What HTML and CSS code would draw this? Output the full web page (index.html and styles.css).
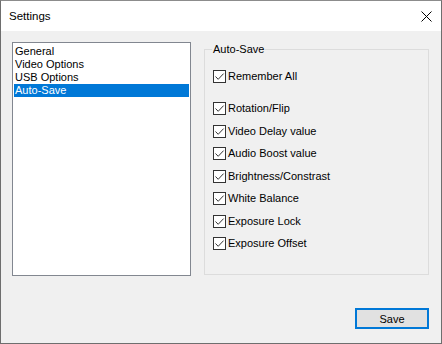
FILE: index.html
```html
<!DOCTYPE html>
<html lang="en">
<head>
  <meta charset="UTF-8">
  <title>Settings</title>
  <link rel="stylesheet" href="styles.css">
</head>
<body>
  <div class="window">
    <div class="titlebar">
      <span class="title">Settings</span>
      <svg class="close" width="11" height="11" viewBox="0 0 11 11">
        <path d="M0.5 0.5 L10.5 10.5 M10.5 0.5 L0.5 10.5" stroke="#000" stroke-width="1" fill="none"/>
      </svg>
    </div>

    <div class="client">
      <div class="panes">
        <ul class="listbox">
          <li>General</li>
          <li>Video Options</li>
          <li>USB Options</li>
          <li class="selected">Auto-Save</li>
        </ul>

        <fieldset class="group">
          <legend>Auto-Save</legend>
          <label class="check first"><span class="box"><svg width="11" height="11" viewBox="0 0 11 11"><path d="M1.5 5.5 L4.2 8.3 L9.6 2.6" stroke="#333" stroke-width="1" fill="none"/></svg></span>Remember All</label>
          <label class="check apart"><span class="box"><svg width="11" height="11" viewBox="0 0 11 11"><path d="M1.5 5.5 L4.2 8.3 L9.6 2.6" stroke="#333" stroke-width="1" fill="none"/></svg></span>Rotation/Flip</label>
          <label class="check"><span class="box"><svg width="11" height="11" viewBox="0 0 11 11"><path d="M1.5 5.5 L4.2 8.3 L9.6 2.6" stroke="#333" stroke-width="1" fill="none"/></svg></span>Video Delay value</label>
          <label class="check"><span class="box"><svg width="11" height="11" viewBox="0 0 11 11"><path d="M1.5 5.5 L4.2 8.3 L9.6 2.6" stroke="#333" stroke-width="1" fill="none"/></svg></span>Audio Boost value</label>
          <label class="check"><span class="box"><svg width="11" height="11" viewBox="0 0 11 11"><path d="M1.5 5.5 L4.2 8.3 L9.6 2.6" stroke="#333" stroke-width="1" fill="none"/></svg></span>Brightness/Constrast</label>
          <label class="check"><span class="box"><svg width="11" height="11" viewBox="0 0 11 11"><path d="M1.5 5.5 L4.2 8.3 L9.6 2.6" stroke="#333" stroke-width="1" fill="none"/></svg></span>White Balance</label>
          <label class="check"><span class="box"><svg width="11" height="11" viewBox="0 0 11 11"><path d="M1.5 5.5 L4.2 8.3 L9.6 2.6" stroke="#333" stroke-width="1" fill="none"/></svg></span>Exposure Lock</label>
          <label class="check"><span class="box"><svg width="11" height="11" viewBox="0 0 11 11"><path d="M1.5 5.5 L4.2 8.3 L9.6 2.6" stroke="#333" stroke-width="1" fill="none"/></svg></span>Exposure Offset</label>
        </fieldset>
      </div>

      <div class="footer">
        <button class="save">Save</button>
      </div>
    </div>
  </div>
</body>
</html>
```

FILE: styles.css
```css
body {
  margin: 0;
  font-family: "Liberation Sans", Arial, sans-serif;
  font-size: 11px;
  color: #000;
  background: #fff;
}

.window {
  box-sizing: border-box;
  width: 442px;
  height: 344px;
  border: 1px solid #6e6e6e;
  border-top-color: #8c8c8c;
  display: flex;
  flex-direction: column;
}

.titlebar {
  height: 30px;
  flex: none;
  background: #fff;
  display: flex;
  align-items: center;
  padding-left: 8px;
}

.title {
  font-size: 11.5px;
  flex: 1;
}

.close {
  margin-right: 9px;
}

.client {
  flex: 1;
  background: #f0f0f0;
  padding: 11px 12px 14px 11px;
  display: flex;
  flex-direction: column;
}

.panes {
  display: flex;
  gap: 13px;
  align-items: flex-start;
}

.listbox {
  box-sizing: border-box;
  width: 179px;
  height: 234px;
  margin: 0;
  padding: 2px 1px;
  list-style: none;
  background: #fff;
  border: 1px solid #828790;
}

.listbox li {
  line-height: 13px;
  height: 13px;
  padding-left: 1px;
}

.listbox li.selected {
  background: #0078d7;
  color: #fff;
}

.group {
  box-sizing: border-box;
  width: 225px;
  height: 233px;
  margin: 0;
  padding: 0 0 0 7px;
  min-width: 0;
  border: 1px solid #dcdcdc;
  display: flex;
  flex-direction: column;
}

.group legend {
  padding: 0 1px;
  line-height: 14px;
}

.check {
  display: flex;
  align-items: center;
  height: 13px;
  line-height: 13px;
  margin-top: 9.5px;
  margin-left: 1px;
}

.check.first {
  margin-top: 14px;
}

.check.apart {
  margin-top: 19px;
}

.box {
  box-sizing: border-box;
  width: 13px;
  height: 13px;
  border: 1px solid #333;
  background: #fff;
  margin-right: 2px;
  display: flex;
}

.footer {
  margin-top: auto;
  display: flex;
  justify-content: flex-end;
}

.save {
  box-sizing: border-box;
  width: 74px;
  height: 21px;
  padding: 0;
  border: 2px solid #0078d7;
  background: #e1e1e1;
  font-family: "Liberation Sans", Arial, sans-serif;
  font-size: 11px;
  color: #000;
}
```
